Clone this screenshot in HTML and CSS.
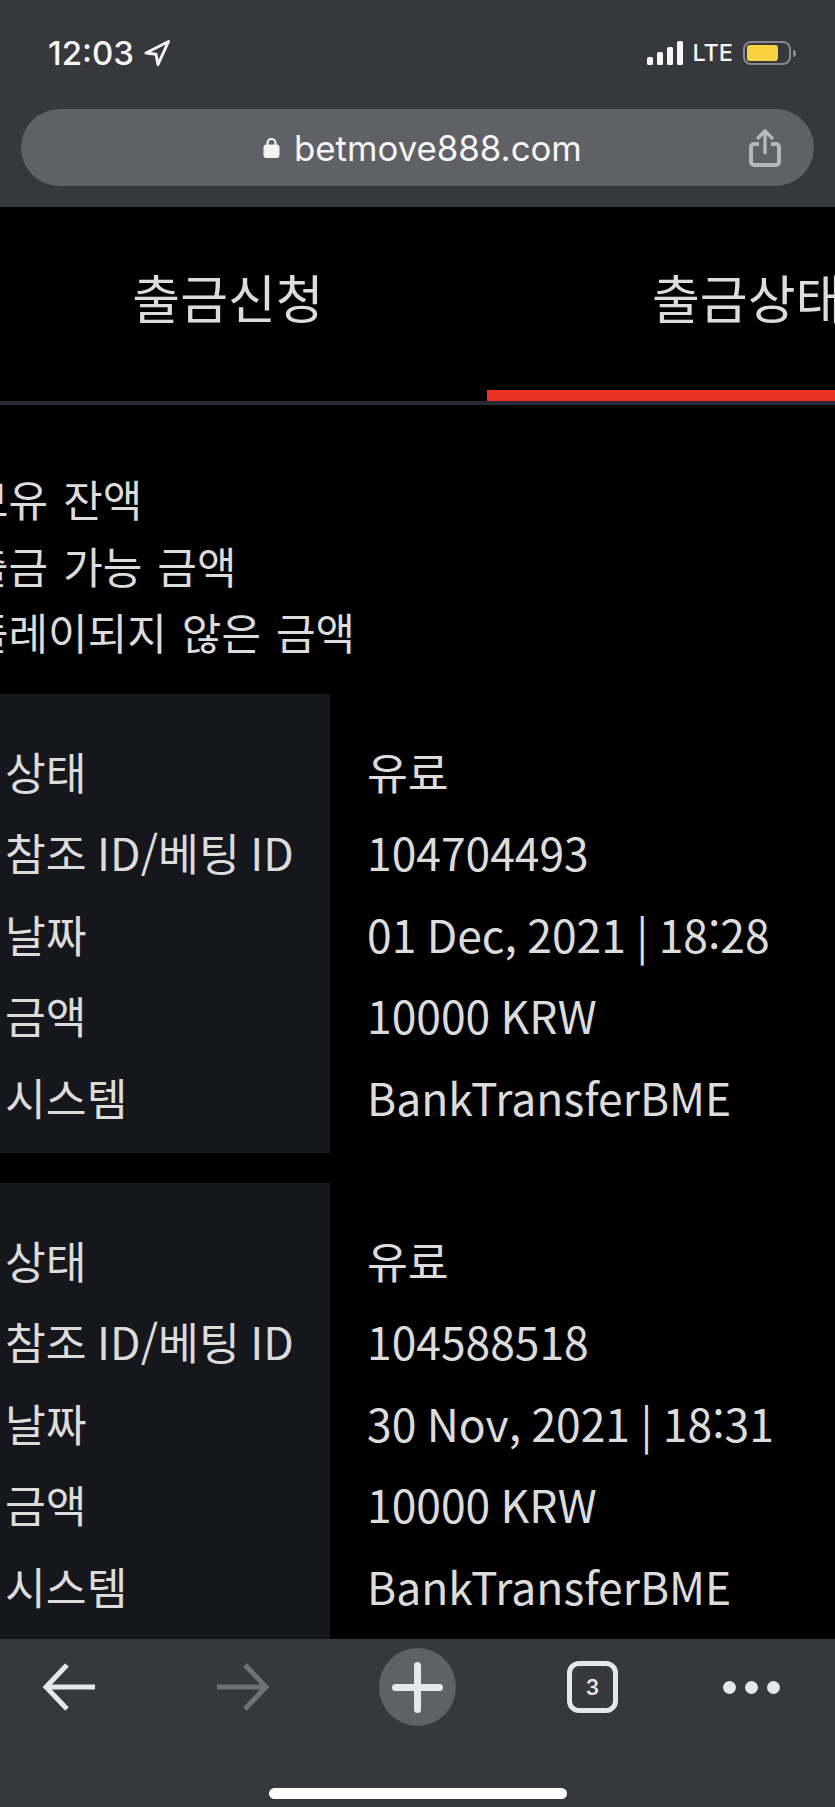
FILE: index.html
```html
<!DOCTYPE html>
<html lang="ko">
<head>
    <meta charset="UTF-8">
    <meta name="viewport" content="width=device-width, initial-scale=1.0">
    <title>betmove888.com</title>
    <link rel="stylesheet" href="styles.css">
</head>
<body>
    <!-- Browser top -->
    <header class="top-bar">
        <div class="status-row">
            <div class="clock">
                <span>12:03</span>
                <svg class="location-icon" viewBox="0 0 26 26" width="26" height="26">
                    <path d="M24.5 1.5 L2 13 L12 14.2 L14 24.5 Z" fill="none" stroke="#f4f4f4" stroke-width="3" stroke-linejoin="round"/>
                </svg>
            </div>
            <div class="status-icons">
                <div class="signal">
                    <span class="bar bar-1"></span>
                    <span class="bar bar-2"></span>
                    <span class="bar bar-3"></span>
                    <span class="bar bar-4"></span>
                </div>
                <span class="network">LTE</span>
                <div class="battery"><span class="battery-fill"></span></div>
                <span class="battery-nub"></span>
            </div>
        </div>
        <div class="url-pill">
            <div class="url">
                <svg class="lock-icon" viewBox="0 0 17 21" width="17" height="21">
                    <path d="M4.5 9 V6 a4 4 0 0 1 8 0 V9" fill="none" stroke="#f4f4f4" stroke-width="2.2"/>
                    <rect x="0.5" y="7.5" width="16" height="13.5" rx="3" fill="#f4f4f4"/>
                </svg>
                <span>betmove888.com</span>
            </div>
            <svg class="share-icon" viewBox="0 0 32 38" width="32" height="38">
                <path d="M10 15 H5 a3 3 0 0 0 -3 3 V33 a3 3 0 0 0 3 3 H27 a3 3 0 0 0 3 -3 V18 a3 3 0 0 0 -3 -3 H22" fill="none" stroke="#b5b7bb" stroke-width="4"/>
                <path d="M16 25 V3 M8 10 L16 2 L24 10" fill="none" stroke="#b5b7bb" stroke-width="3.4"/>
            </svg>
        </div>
    </header>

    <main class="content">
        <div class="page">
            <nav class="tabs">
                <div class="tab">출금신청</div>
                <div class="tab active">출금상태</div>
            </nav>

            <div class="balance">
                <div>보유 잔액</div>
                <div>출금 가능 금액</div>
                <div>플레이되지 않은 금액</div>
            </div>

            <!-- Record 1 -->
            <div class="record">
                <div class="labels">
                    <div>상태</div>
                    <div>참조 ID/베팅 ID</div>
                    <div>날짜</div>
                    <div>금액</div>
                    <div>시스템</div>
                </div>
                <div class="values">
                    <div>유료</div>
                    <div>104704493</div>
                    <div>01 Dec, 2021 | 18:28</div>
                    <div>10000 KRW</div>
                    <div>BankTransferBME</div>
                </div>
            </div>

            <!-- Record 2 -->
            <div class="record">
                <div class="labels">
                    <div>상태</div>
                    <div>참조 ID/베팅 ID</div>
                    <div>날짜</div>
                    <div>금액</div>
                    <div>시스템</div>
                </div>
                <div class="values">
                    <div>유료</div>
                    <div>104588518</div>
                    <div>30 Nov, 2021 | 18:31</div>
                    <div>10000 KRW</div>
                    <div>BankTransferBME</div>
                </div>
            </div>
        </div>
    </main>

    <!-- Browser bottom -->
    <footer class="bottom-bar">
        <div class="toolbar">
            <svg class="tool-back" viewBox="0 0 52 48" width="52" height="48">
                <path d="M52 24 H3 M24 2 L3 24 L24 46" fill="none" stroke="#e6e7ea" stroke-width="5"/>
            </svg>
            <svg class="tool-forward" viewBox="0 0 52 48" width="52" height="48">
                <path d="M0 24 H49 M28 2 L49 24 L28 46" fill="none" stroke="#707175" stroke-width="5"/>
            </svg>
            <div class="tool-new">
                <svg viewBox="0 0 51 51" width="51" height="51">
                    <path d="M25.5 3.5 V47.5 M3.5 25.5 H47.5" fill="none" stroke="#e6e7ea" stroke-width="7" stroke-linecap="round"/>
                </svg>
            </div>
            <div class="tool-tabs">3</div>
            <div class="tool-more">
                <span></span>
                <span></span>
                <span></span>
            </div>
        </div>
        <div class="home-indicator"></div>
    </footer>
</body>
</html>
```

FILE: styles.css
```css
html, body {
    margin: 0;
    height: 100%;
}
body {
    width: 835px;
    height: 1807px;
    display: flex;
    flex-direction: column;
    overflow: hidden;
    background: #000;
    font-family: "Noto Sans CJK KR", "Noto Sans", sans-serif;
    color: #dcdcdc;
}

/* top bar */
.top-bar {
    height: 207px;
    flex-shrink: 0;
    box-sizing: border-box;
    padding: 37px 21px 0;
    background: #37383c;
    font-family: Inter, "Noto Sans", sans-serif;
    color: #f6f6f6;
}
.status-row {
    height: 32px;
    display: flex;
    align-items: center;
    justify-content: space-between;
    margin-bottom: 40px;
}
.clock {
    display: flex;
    align-items: center;
    gap: 10px;
    margin-left: 27px;
    font-size: 33px;
    font-weight: 500;
}
.status-icons {
    display: flex;
    align-items: center;
    margin-right: 18px;
}
.signal {
    display: flex;
    align-items: flex-end;
    gap: 4px;
    height: 24px;
    margin-right: 9px;
}
.bar {
    width: 6px;
    border-radius: 1.5px;
    background: #f6f6f6;
}
.bar-1 { height: 8px; }
.bar-2 { height: 13px; }
.bar-3 { height: 18px; }
.bar-4 { height: 24px; }
.network {
    font-size: 23.5px;
    font-weight: 500;
    line-height: 24px;
    margin-right: 10px;
}
.battery {
    width: 48px;
    height: 24px;
    box-sizing: border-box;
    padding: 2px;
    border: 2px solid #87888c;
    border-radius: 8px;
}
.battery-fill {
    display: block;
    width: 31px;
    height: 16px;
    border-radius: 3px;
    background: #f8d33f;
}
.battery-nub {
    width: 3px;
    height: 7px;
    margin-left: 2px;
    border-radius: 0 3px 3px 0;
    background: #87888c;
}
.url-pill {
    height: 77px;
    box-sizing: border-box;
    padding: 0 33px 0 242px;
    display: flex;
    align-items: center;
    justify-content: space-between;
    border-radius: 39px;
    background: #5f6166;
}
.url {
    display: flex;
    align-items: center;
    gap: 14px;
    font-size: 34.8px;
}

/* page, scrolled sideways in the shot */
.content {
    flex: 1;
    overflow: hidden;
}
.page {
    width: 1044px;
    margin-left: -35px;
}
.tabs {
    display: grid;
    grid-template-columns: 518px 522px;
    padding-left: 4px;
    border-bottom: 4px solid #2a2a36;
}
.tab {
    height: 179px;
    padding-bottom: 4px;
    display: flex;
    align-items: center;
    justify-content: center;
    border-bottom: 11px solid transparent;
    font-size: 52px;
}
.tab.active {
    justify-content: flex-start;
    padding-left: 165px;
    border-bottom-color: #ea3323;
}
.balance {
    padding: 60px 0 29.5px 4px;
    font-size: 43px;
    line-height: 66.5px;
    word-spacing: 3px;
}
.record {
    display: flex;
    margin-bottom: 30px;
    font-size: 44.4px;
    line-height: 81.4px;
    word-spacing: -2px;
}
.labels {
    width: 365px;
    box-sizing: border-box;
    padding: 36px 0 16px 40px;
    background: #16171c;
}
.values {
    padding: 36px 0 16px 37px;
}

/* bottom bar */
.bottom-bar {
    height: 168px;
    flex-shrink: 0;
    box-sizing: border-box;
    padding-top: 9px;
    background: #37383c;
}
.toolbar {
    height: 78px;
    display: flex;
    align-items: center;
    padding-left: 43px;
}
.tool-forward {
    margin-left: 122px;
}
.tool-new {
    width: 77px;
    height: 78px;
    margin-left: 110px;
    display: flex;
    align-items: center;
    justify-content: center;
    border-radius: 50%;
    background: #5f6166;
}
.tool-tabs {
    width: 51px;
    height: 52px;
    box-sizing: border-box;
    margin-left: 111px;
    display: flex;
    align-items: center;
    justify-content: center;
    border: 5px solid #e6e7ea;
    border-radius: 12px;
    font-family: Inter, "Noto Sans", sans-serif;
    font-size: 21px;
    font-weight: 600;
    color: #e6e7ea;
}
.tool-more {
    display: flex;
    gap: 9px;
    margin-left: 105px;
}
.tool-more span {
    width: 13px;
    height: 13px;
    border-radius: 50%;
    background: #e6e7ea;
}
.home-indicator {
    width: 298px;
    height: 11px;
    margin: 62px 0 0 269px;
    border-radius: 6px;
    background: #fff;
}
```
